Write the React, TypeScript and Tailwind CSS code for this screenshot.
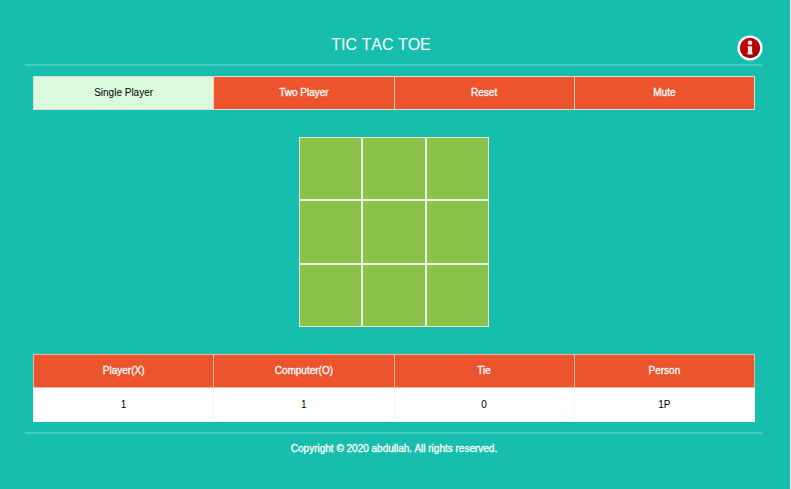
import { useState } from "react";

const modes = ["Single Player", "Two Player", "Reset", "Mute"];
const scores = [
  { label: "Player(X)", value: "1" },
  { label: "Computer(O)", value: "1" },
  { label: "Tie", value: "0" },
  { label: "Person", value: "1P" },
];

function InfoIcon() {
  return (
    <svg viewBox="0 0 26 26" className="block size-[26px]" aria-hidden="true">
      <defs>
        <linearGradient id="info-red" x1="0" y1="0" x2="1" y2="1">
          <stop offset="0" stopColor="#d00808" />
          <stop offset="1" stopColor="#980000" />
        </linearGradient>
      </defs>
      <circle cx="13" cy="13" r="12.6" fill="#f7fafa" />
      <circle cx="13" cy="13" r="10.2" fill="url(#info-red)" />
      <circle cx="13" cy="7.8" r="2.3" fill="#f6e6e6" />
      <path d="M10.6 11.2h4.5v6.4h.5v2h-5.2v-2h.5v-4.8h-.3z" fill="#f6e6e6" />
    </svg>
  );
}

function Board() {
  const cells = Array.from({ length: 9 }, (_, i) => i);
  return (
    <div className="mx-auto mt-[27px] grid size-[190px] grid-cols-3 grid-rows-3 gap-0.5 border border-[#eef6e4] bg-[#eef6e4]">
      {cells.map((i) => (
        <button
          key={i}
          type="button"
          aria-label={`Cell ${i + 1}`}
          className="bg-[#8bc34a]"
        />
      ))}
    </div>
  );
}

export default function App() {
  const [active, setActive] = useState("Single Player");
  return (
    <div className="min-h-screen border-r border-[#eef5f4] bg-[#17bead] pt-[35px] pr-[27px] pl-[25px] font-['Liberation_Sans',Arial,sans-serif] text-[10px] leading-4 text-white">
      <header className="flex items-start border-b-2 border-[#45cabd] pb-[3px]">
        <h1 className="flex-1 text-center text-base leading-5 [font-kerning:none]">TIC TAC TOE</h1>
        <button type="button" aria-label="Information">
          <InfoIcon />
        </button>
      </header>

      <main className="px-2 pt-[10px] pb-[10px]">
        <nav className="grid grid-cols-4 gap-px border border-[#d9dfd5] bg-[#f3cfc2]">
          {modes.map((mode) => (
            <button
              key={mode}
              type="button"
              onClick={() => setActive(mode)}
              className={
                mode === active
                  ? "h-8 bg-[#dbfadb] text-black"
                  : "h-8 bg-[#ec542d] text-white [-webkit-text-stroke:0.3px_white]"
              }
            >
              {mode}
            </button>
          ))}
        </nav>

        <Board />

        <table className="mt-[27px] w-full table-fixed border-collapse text-center">
          <thead>
            <tr className="h-[33px] bg-[#ec542d] [-webkit-text-stroke:0.3px_white]">
              {scores.map((s) => (
                <th key={s.label} scope="col" className="border border-[#efb8a4] font-normal">
                  {s.label}
                </th>
              ))}
            </tr>
          </thead>
          <tbody>
            <tr className="h-[34px] bg-white text-black">
              {scores.map((s) => (
                <td key={s.label} className="border border-t-0 border-[#eefaf9]">
                  {s.value}
                </td>
              ))}
            </tr>
          </tbody>
        </table>
      </main>

      <footer className="border-t-2 border-[#45cabd] pt-[7px] text-center [-webkit-text-stroke:0.3px_white]">
        Copyright © 2020 abdullah. All rights reserved.
      </footer>
    </div>
  );
}
